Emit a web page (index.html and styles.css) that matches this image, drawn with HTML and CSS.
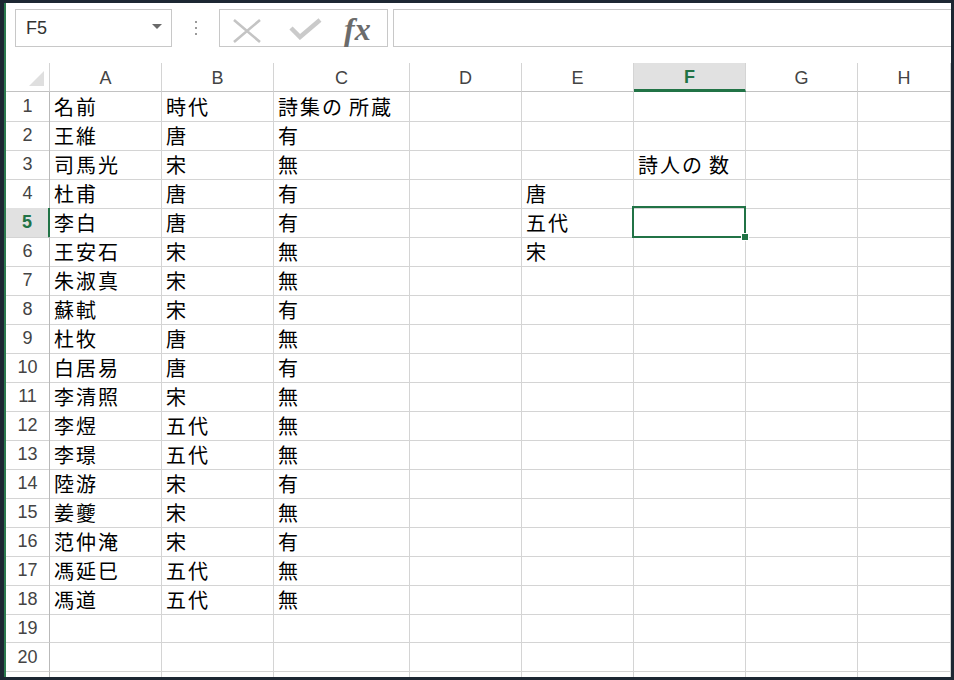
FILE: index.html
```html
<!DOCTYPE html>
<html lang="ja">
<head>
<meta charset="utf-8">
<title>Excel</title>
<link rel="stylesheet" href="styles.css">
</head>
<body>
<div class="frame">
  <div class="window">
    <div class="fbar">
      <div class="namebox"><span class="ref">F5</span><span class="caret"></span></div>
      <div class="dots"><i></i><i></i><i></i></div>
      <div class="btns">
        <svg class="ico-x" width="28" height="24" viewBox="0 0 28 24"><path d="M1 1 L27 23 M27 1 L1 23" stroke="#c4c4c4" stroke-width="2.6" fill="none"/></svg>
        <svg class="ico-ok" width="33" height="22" viewBox="0 0 33 22"><path d="M2 10 L11 19 L31 2" stroke="#cacaca" stroke-width="4.5" fill="none"/></svg>
        <span class="fx">fx</span>
      </div>
      <div class="finput"></div>
    </div>
    <div class="sheet">
      <div class="row head">
        <div class="corner"><svg width="15" height="15" viewBox="0 0 15 15"><polygon points="15,0 15,15 0,15" fill="#dfdfdf"/></svg></div>
        <div class="ch">A</div><div class="ch">B</div><div class="ch">C</div><div class="ch">D</div><div class="ch">E</div><div class="ch sel">F</div><div class="ch">G</div><div class="ch">H</div>
      </div>
      <div class="row"><div class="rh">1</div><div class="c">名前</div><div class="c">時代</div><div class="c">詩集<span class="no">の</span>所蔵</div><div class="c"></div><div class="c"></div><div class="c"></div><div class="c"></div><div class="c"></div></div>
      <div class="row"><div class="rh">2</div><div class="c">王維</div><div class="c">唐</div><div class="c">有</div><div class="c"></div><div class="c"></div><div class="c"></div><div class="c"></div><div class="c"></div></div>
      <div class="row"><div class="rh">3</div><div class="c">司馬光</div><div class="c">宋</div><div class="c">無</div><div class="c"></div><div class="c"></div><div class="c">詩人<span class="no">の</span>数</div><div class="c"></div><div class="c"></div></div>
      <div class="row"><div class="rh">4</div><div class="c">杜甫</div><div class="c">唐</div><div class="c">有</div><div class="c"></div><div class="c">唐</div><div class="c"></div><div class="c"></div><div class="c"></div></div>
      <div class="row"><div class="rh sel">5</div><div class="c">李白</div><div class="c">唐</div><div class="c">有</div><div class="c"></div><div class="c">五代</div><div class="c active"><span class="selbox"><span class="handle"></span></span></div><div class="c"></div><div class="c"></div></div>
      <div class="row"><div class="rh">6</div><div class="c">王安石</div><div class="c">宋</div><div class="c">無</div><div class="c"></div><div class="c">宋</div><div class="c"></div><div class="c"></div><div class="c"></div></div>
      <div class="row"><div class="rh">7</div><div class="c">朱淑真</div><div class="c">宋</div><div class="c">無</div><div class="c"></div><div class="c"></div><div class="c"></div><div class="c"></div><div class="c"></div></div>
      <div class="row"><div class="rh">8</div><div class="c">蘇軾</div><div class="c">宋</div><div class="c">有</div><div class="c"></div><div class="c"></div><div class="c"></div><div class="c"></div><div class="c"></div></div>
      <div class="row"><div class="rh">9</div><div class="c">杜牧</div><div class="c">唐</div><div class="c">無</div><div class="c"></div><div class="c"></div><div class="c"></div><div class="c"></div><div class="c"></div></div>
      <div class="row"><div class="rh">10</div><div class="c">白居易</div><div class="c">唐</div><div class="c">有</div><div class="c"></div><div class="c"></div><div class="c"></div><div class="c"></div><div class="c"></div></div>
      <div class="row"><div class="rh">11</div><div class="c">李清照</div><div class="c">宋</div><div class="c">無</div><div class="c"></div><div class="c"></div><div class="c"></div><div class="c"></div><div class="c"></div></div>
      <div class="row"><div class="rh">12</div><div class="c">李煜</div><div class="c">五代</div><div class="c">無</div><div class="c"></div><div class="c"></div><div class="c"></div><div class="c"></div><div class="c"></div></div>
      <div class="row"><div class="rh">13</div><div class="c">李璟</div><div class="c">五代</div><div class="c">無</div><div class="c"></div><div class="c"></div><div class="c"></div><div class="c"></div><div class="c"></div></div>
      <div class="row"><div class="rh">14</div><div class="c">陸游</div><div class="c">宋</div><div class="c">有</div><div class="c"></div><div class="c"></div><div class="c"></div><div class="c"></div><div class="c"></div></div>
      <div class="row"><div class="rh">15</div><div class="c">姜夔</div><div class="c">宋</div><div class="c">無</div><div class="c"></div><div class="c"></div><div class="c"></div><div class="c"></div><div class="c"></div></div>
      <div class="row"><div class="rh">16</div><div class="c">范仲淹</div><div class="c">宋</div><div class="c">有</div><div class="c"></div><div class="c"></div><div class="c"></div><div class="c"></div><div class="c"></div></div>
      <div class="row"><div class="rh">17</div><div class="c">馮延巳</div><div class="c">五代</div><div class="c">無</div><div class="c"></div><div class="c"></div><div class="c"></div><div class="c"></div><div class="c"></div></div>
      <div class="row"><div class="rh">18</div><div class="c">馮道</div><div class="c">五代</div><div class="c">無</div><div class="c"></div><div class="c"></div><div class="c"></div><div class="c"></div><div class="c"></div></div>
      <div class="row"><div class="rh">19</div><div class="c"></div><div class="c"></div><div class="c"></div><div class="c"></div><div class="c"></div><div class="c"></div><div class="c"></div><div class="c"></div></div>
      <div class="row"><div class="rh">20</div><div class="c"></div><div class="c"></div><div class="c"></div><div class="c"></div><div class="c"></div><div class="c"></div><div class="c"></div><div class="c"></div></div>
      <div class="row"><div class="rh"></div><div class="c"></div><div class="c"></div><div class="c"></div><div class="c"></div><div class="c"></div><div class="c"></div><div class="c"></div><div class="c"></div></div>
    </div>
  </div>
</div>
</body>
</html>
```
FILE: styles.css
```css
* { box-sizing: border-box; }
html, body { margin: 0; padding: 0; }
body {
  background: #1d2733;
  width: 954px;
  height: 680px;
  overflow: hidden;
}
.frame {
  padding: 3px 3px 3px 4px;
  height: 680px;
}
.window {
  background: #ffffff;
  border-left: 2px solid #2b7a4f;
  height: 674px;
  overflow: hidden;
}
.fbar {
  height: 60px;
  display: flex;
  align-items: flex-start;
  padding: 6px 0 0 9px;
}
.namebox {
  width: 157px;
  height: 38px;
  border: 1px solid #c8c8c8;
  display: flex;
  align-items: center;
  justify-content: space-between;
  padding: 0 9px 0 10px;
  font-family: "Liberation Sans", Arial, sans-serif;
  font-size: 18px;
  color: #333;
}
.caret {
  width: 0;
  height: 0;
  border-left: 5px solid transparent;
  border-right: 5px solid transparent;
  border-top: 5px solid #6a6a6a;
  margin-top: -4px;
}
.dots {
  width: 47px;
  display: flex;
  flex-direction: column;
  align-items: center;
  gap: 4px;
  padding-top: 12px;
}
.dots i {
  display: block;
  width: 2px;
  height: 2px;
  background: #9a9a9a;
}
.btns {
  width: 169px;
  height: 38px;
  border: 1px solid #c8c8c8;
  display: flex;
  align-items: center;
  padding-left: 13px;
}
.ico-x { margin-top: 6px; }
.ico-ok { margin-left: 28px; margin-top: 2px; }
.fx {
  margin-left: 22px;
  font-family: "Liberation Serif", "Times New Roman", serif;
  font-style: italic;
  font-weight: bold;
  font-size: 32px;
  color: #6b6b6b;
  line-height: 1;
  margin-top: 2px;
}
.finput {
  flex: 1;
  height: 38px;
  margin-left: 5px;
  border: 1px solid #c8c8c8;
  border-right: none;
}
.sheet {
  font-family: "Noto Sans CJK JP", "Noto Sans CJK SC", sans-serif;
}
.row {
  display: grid;
  grid-template-columns: 44px 112px 112px 136px 112px 112px 112px 112px 93px;
  height: 29px;
}
.row > div {
  border-right: 1px solid #d4d4d4;
  border-bottom: 1px solid #d4d4d4;
  display: flex;
  align-items: center;
  white-space: nowrap;
}
.head > div { border-bottom-color: #c2c2c2; }
.corner {
  justify-content: flex-end;
  align-items: flex-end !important;
  padding: 0 5px 5px 0;
}
.ch {
  justify-content: center;
  font-family: "Liberation Sans", Arial, sans-serif;
  font-size: 18px;
  color: #444;
  padding-top: 2px;
}
.ch.sel {
  background: #e1e1e1;
  color: #217346;
  border-bottom: 3px solid #217346 !important;
  font-weight: bold;
}
.rh {
  justify-content: center;
  font-family: "Liberation Sans", Arial, sans-serif;
  font-size: 18px;
  color: #444;
  border-right-color: #b9b9b9 !important;
}
.rh.sel {
  background: #e1e1e1;
  color: #217346;
  font-weight: bold;
  border-right: 2px solid #217346 !important;
}
.c {
  padding-left: 4px;
  font-size: 20px;
  letter-spacing: 2px;
  color: #000;
}
.no { margin-right: 5px; }
.active { position: relative; }
.selbox {
  position: absolute;
  top: -2px;
  left: -2px;
  right: -1px;
  bottom: -1px;
  border: 2px solid #217346;
}
.handle {
  position: absolute;
  right: -5px;
  bottom: -5px;
  width: 8px;
  height: 8px;
  background: #217346;
  border: 1px solid #ffffff;
}
```
